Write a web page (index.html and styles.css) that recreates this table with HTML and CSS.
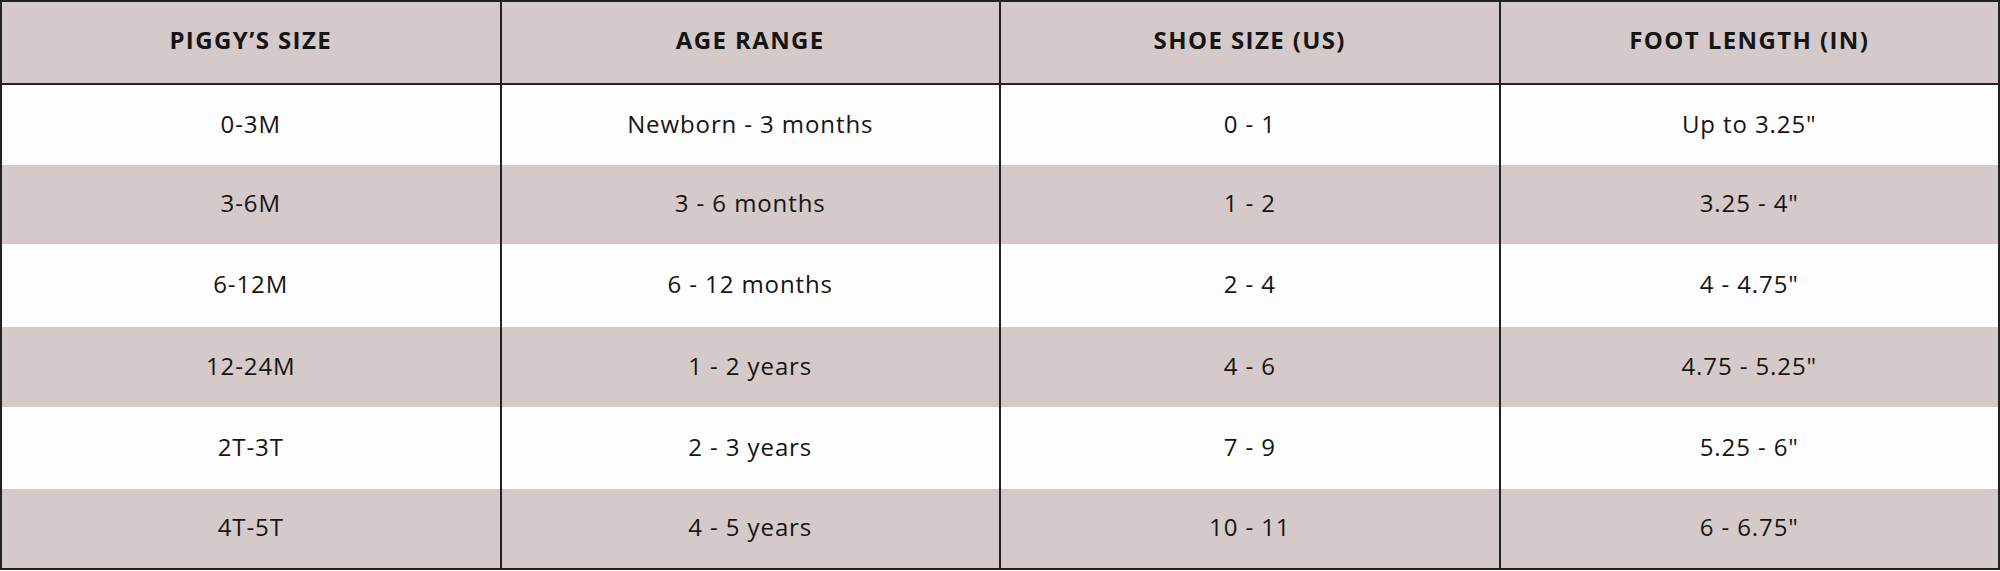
FILE: index.html
```html
<!DOCTYPE html>
<html>
<head>
<meta charset="utf-8">
<link rel="stylesheet" href="styles.css">
</head>
<body>
<table class="size-table">
  <thead>
    <tr>
      <th>PIGGY’S SIZE</th>
      <th>AGE RANGE</th>
      <th>SHOE SIZE (US)</th>
      <th>FOOT LENGTH (IN)</th>
    </tr>
  </thead>
  <tbody>
    <tr class="light r1"><td>0-3M</td><td>Newborn - 3 months</td><td>0 - 1</td><td>Up to 3.25"</td></tr>
    <tr class="tint r2"><td>3-6M</td><td>3 - 6 months</td><td>1 - 2</td><td>3.25 - 4"</td></tr>
    <tr class="light r3"><td>6-12M</td><td>6 - 12 months</td><td>2 - 4</td><td>4 - 4.75"</td></tr>
    <tr class="tint r4"><td>12-24M</td><td>1 - 2 years</td><td>4 - 6</td><td>4.75 - 5.25"</td></tr>
    <tr class="light r5"><td>2T-3T</td><td>2 - 3 years</td><td>7 - 9</td><td>5.25 - 6"</td></tr>
    <tr class="tint r6"><td>4T-5T</td><td>4 - 5 years</td><td>10 - 11</td><td>6 - 6.75"</td></tr>
  </tbody>
</table>
</body>
</html>
```

FILE: styles.css
```css
html, body {
  margin: 0;
  padding: 0;
  background: #fdfdfd;
}

.size-table {
  width: 2000px;
  border-collapse: collapse;
  table-layout: fixed;
  border: 2px solid #222;
  font-family: "Open Sans", "Liberation Sans", sans-serif;
  color: #151515;
}

.size-table th,
.size-table td {
  width: 25%;
  border-left: 2px solid #222;
  border-right: 2px solid #222;
  text-align: center;
  vertical-align: middle;
  padding: 0;
}

.size-table th {
  height: 74px;
  padding-bottom: 7px;
  background: #d6c9c9;
  border-bottom: 2px solid #222;
  font-weight: 700;
  font-size: 24px;
  letter-spacing: 1.4px;
}

.size-table td {
  font-size: 24px;
  font-weight: 400;
  letter-spacing: 0.9px;
  padding-bottom: 4px;
}

.size-table tr.r1 td { height: 76px; }
.size-table tr.r2 td { height: 75px; }
.size-table tr.r3 td { height: 79px; }
.size-table tr.r4 td { height: 76px; }
.size-table tr.r5 td { height: 78px; }
.size-table tr.r6 td { height: 75px; }

.size-table tr.light td {
  background: #fdfdfd;
}

.size-table tr.tint td {
  background: #d6c9c9;
}
```
